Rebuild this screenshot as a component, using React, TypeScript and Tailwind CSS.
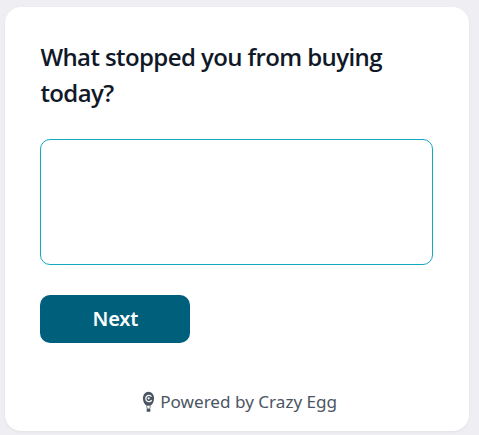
export default function App() {
  return (
    <div className="w-[479px] h-[435px] overflow-hidden bg-[#eeeef3] pl-[5px] pt-[7px] font-['Noto_Sans','Open_Sans',sans-serif]">
      <div className="w-[464px] h-[424px] rounded-[16px] bg-white pl-[35.4px] pr-[36px] pt-[32px] flex flex-col shadow-[0_1px_3px_rgba(0,0,0,0.06)]">
        <h1 className="text-[24px] leading-[36px] font-semibold text-[#111827] tracking-[-0.6px] font-['Open_Sans','Noto_Sans',sans-serif]">What stopped you from buying today?</h1>
        <textarea className="mt-[28px] w-[393px] h-[126px] rounded-[10px] border border-[#12a8c0] bg-white block resize-none outline-none" />
        <button className="mt-[30px] w-[150px] h-[48px] rounded-[10px] bg-[#00607c] text-white text-[20px] font-semibold tracking-[-0.2px]">Next</button>
        <div className="mt-[47px] flex items-center justify-center gap-[5px] text-[17.1px] leading-[24px] text-[#4b5563] pl-[6px]">
          <svg width="13" height="24" viewBox="0 0 14 24" aria-hidden="true">
            <path d="M7 1C3.4 1 1 4.4 1 8.2c0 3.6 2 6.4 3.8 7.8h4.4C11 14.6 13 11.8 13 8.2 13 4.4 10.6 1 7 1z" fill="#4b5563" />
            <path d="M10.2 6.2A3.4 3.4 0 1 0 10.4 10" fill="none" stroke="#fff" strokeWidth="1.4" />
            <circle cx="7.2" cy="8" r="1.2" fill="#fff" />
            <path d="M5 16.5l.6 2.5M9 16.5l-.6 2.5" stroke="#4b5563" strokeWidth="0.8" />
            <rect x="5" y="19" width="4" height="3.6" rx="0.6" fill="#4b5563" />
          </svg>
          <span>Powered by Crazy Egg</span>
        </div>
      </div>
    </div>
  );
}
